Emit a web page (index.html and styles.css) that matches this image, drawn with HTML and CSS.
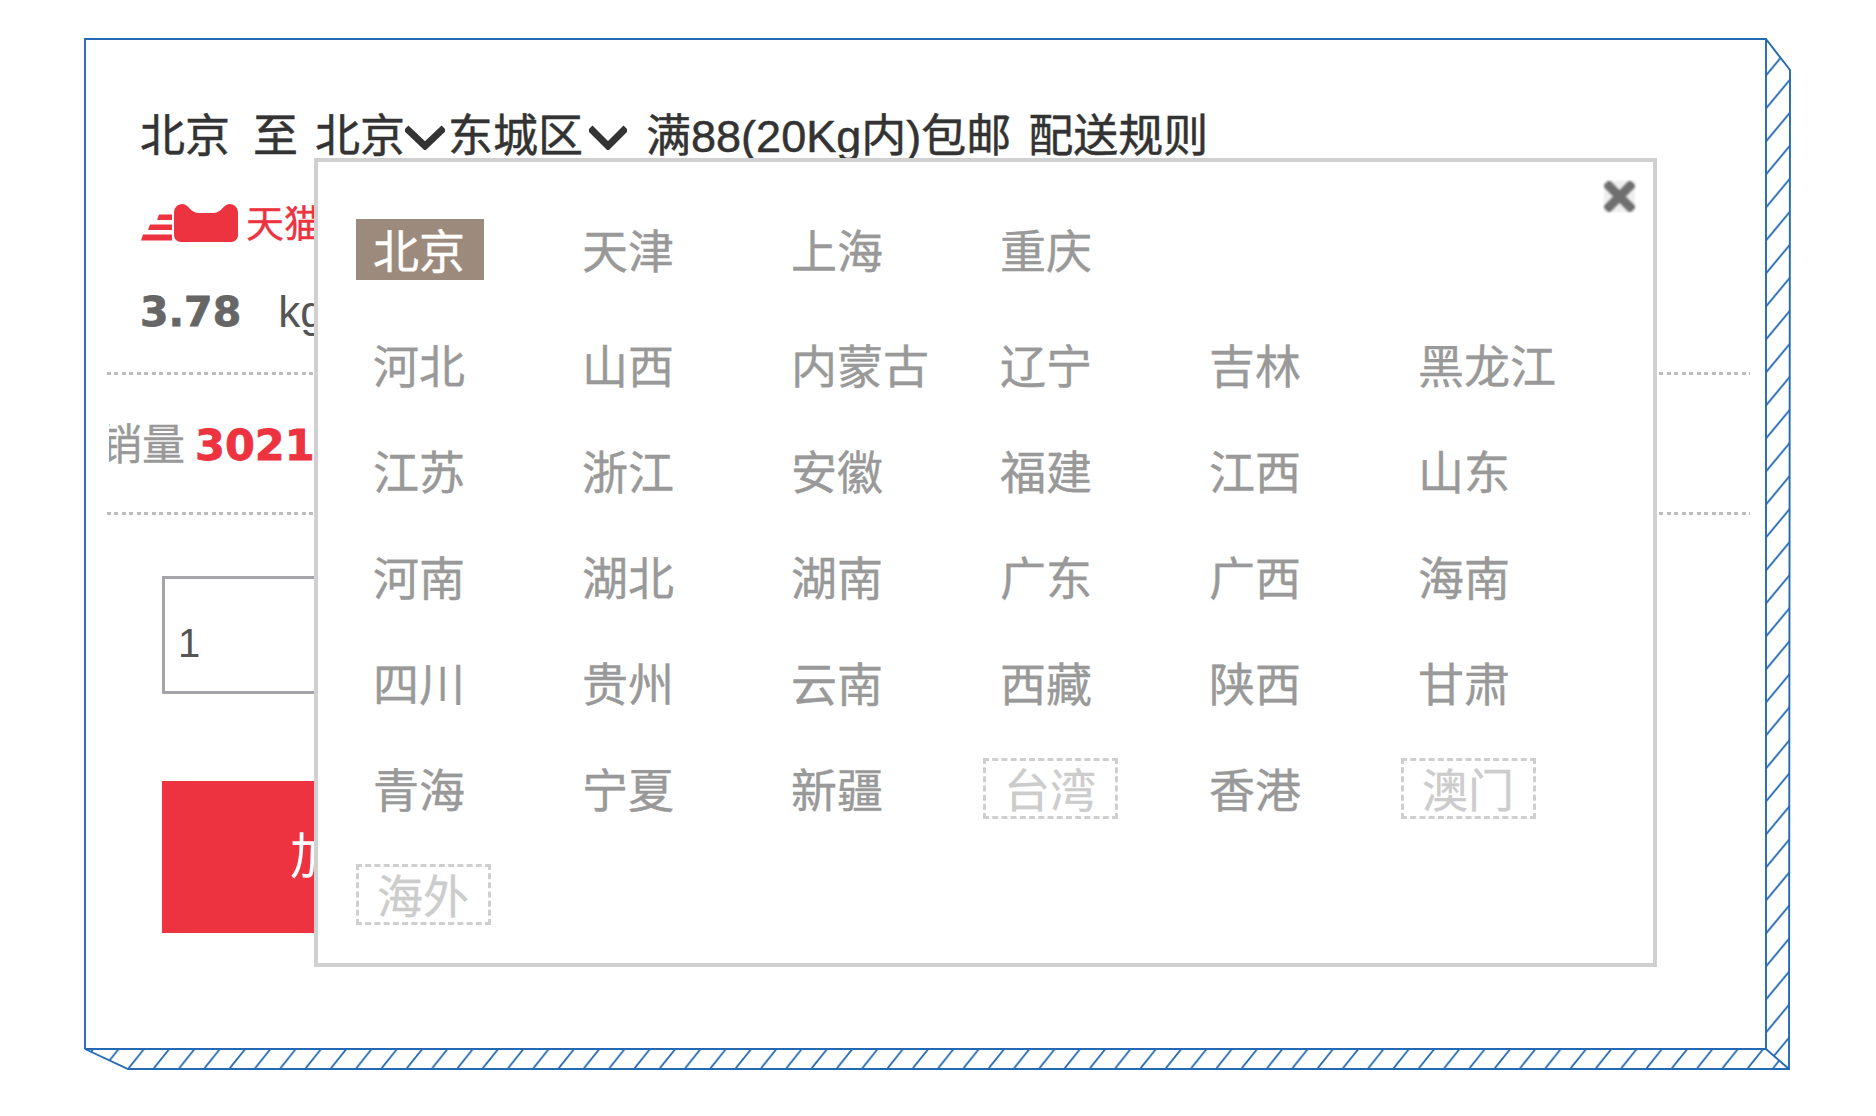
FILE: index.html
```html
<!DOCTYPE html>
<html lang="zh-CN">
<head>
<meta charset="utf-8">
<title>配送</title>
<link rel="stylesheet" href="styles.css">
</head>
<body>
<div class="stage">
  <svg class="frame" width="1876" height="1116" viewBox="0 0 1876 1116" aria-hidden="true">
    <defs>
      <pattern id="hatch-right" patternUnits="userSpaceOnUse" x="1766" y="75.5" width="24" height="33">
        <line x1="0" y1="33" x2="24" y2="4" class="hatch"/>
      </pattern>
      <pattern id="hatch-bottom" patternUnits="userSpaceOnUse" x="128" y="1049" width="25.3" height="20">
        <line x1="0" y1="20" x2="16" y2="0" class="hatch"/>
      </pattern>
    </defs>
    <polygon points="1766,39 1790,70 1789,1069 1766,1049" fill="url(#hatch-right)"/>
    <polygon points="85,1049 128,1069 1789,1069 1766,1049" fill="url(#hatch-bottom)"/>
    <polyline class="edge" points="85,1049 85,39 1766,39 1766,1049 85,1049 128,1069 1789,1069 1790,70 1766,39"/>
    <line class="edge" x1="1766" y1="1049" x2="1789" y2="1069"/>
  </svg>

  <main class="card">
    <div class="ship">
      <span>北京</span>
      <span class="gap-to">至</span>
      <span class="gap-sm">北京</span>
      <svg class="chev" width="40" height="26" viewBox="0 0 40 26"><polyline points="1,4 20,22 39,4"/></svg>
      <span class="gap-none">东城区</span>
      <svg class="chev chev-b" width="38" height="26" viewBox="0 0 38 26"><polyline points="1,4 19,22 37,4"/></svg>
      <span class="gap-free">满88(20Kg内)包邮</span>
      <span class="gap-rule">配送规则</span>
    </div>

    <div class="tmall">
      <svg class="tmall-logo" width="98" height="40" viewBox="0 0 98 40">
        <path d="M18 10.500h13v5.500H16zM9 20.500h22v5.500H7zM2 30.500h29v6H0z"/>
        <path d="M33 9C33 3 37 0 42 0C47 0 50 9 57 9H73C80 9 83 0 88 0C93 0 97 3 97 9V31C97 35 94 38 90 38H40C36 38 33 35 33 31Z"/>
      </svg>
      <span class="tmall-name">天猫</span>
    </div>

    <div class="weight"><b>3.78</b><span class="unit">kg</span></div>

    <div class="dots dots-a"></div>

    <div class="sales"><span class="sales-label">销量</span><b class="sales-num">30215</b></div>

    <div class="dots dots-b"></div>

    <div class="qty">1</div>
    <div class="buy">加入购物车</div>

    <section class="picker">
      <svg class="close" width="31" height="31" viewBox="0 0 31 31"><path d="M2 2L29 29M29 2L2 29"/></svg>
      <div class="grid grid-hot">
        <span class="opt on">北京</span><span class="opt">天津</span><span class="opt">上海</span><span class="opt">重庆</span>
      </div>
      <div class="grid">
        <span class="opt">河北</span><span class="opt">山西</span><span class="opt">内蒙古</span><span class="opt">辽宁</span><span class="opt">吉林</span><span class="opt">黑龙江</span>
        <span class="opt">江苏</span><span class="opt">浙江</span><span class="opt">安徽</span><span class="opt">福建</span><span class="opt">江西</span><span class="opt">山东</span>
        <span class="opt">河南</span><span class="opt">湖北</span><span class="opt">湖南</span><span class="opt">广东</span><span class="opt">广西</span><span class="opt">海南</span>
        <span class="opt">四川</span><span class="opt">贵州</span><span class="opt">云南</span><span class="opt">西藏</span><span class="opt">陕西</span><span class="opt">甘肃</span>
        <span class="opt">青海</span><span class="opt">宁夏</span><span class="opt">新疆</span><span class="opt off">台湾</span><span class="opt">香港</span><span class="opt off">澳门</span>
        <span class="opt off">海外</span>
      </div>
    </section>
  </main>
</div>
</body>
</html>
```

FILE: styles.css
```css
* { box-sizing: border-box; }

html, body {
  margin: 0;
  background: #fff;
}

body {
  font-family: "Liberation Sans", "Noto Sans CJK SC", sans-serif;
  color: #333;
}

.stage {
  position: relative;
  width: 1876px;
  height: 1116px;
  padding: 39px 0 0 85px;
  overflow: hidden;
}

.frame {
  position: absolute;
  top: 0;
  left: 0;
}

.edge {
  fill: none;
  stroke: #2369b3;
  stroke-width: 1.9;
}

.hatch {
  stroke: #2369b3;
  stroke-width: 1.8;
}

.card {
  position: relative;
  width: 1681px;
  height: 1010px;
  padding-top: 68px;
}

.ship {
  display: flex;
  align-items: center;
  height: 60px;
  margin-left: 55px;
  font-size: 45px;
  line-height: 60px;
  color: #333;
  -webkit-text-stroke: 0.5px #333;
  white-space: nowrap;
}

.gap-to { margin-left: 23px; }
.gap-sm { margin-left: 17px; }
.gap-none { margin-left: 3px; }
.gap-free { margin-left: 19px; }
.gap-rule { margin-left: 17px; }

.chev {
  margin-left: 0;
  flex: none;
}

.chev-b { margin-left: 6px; }

.chev polyline {
  fill: none;
  stroke: #333;
  stroke-width: 7;
}

.tmall {
  display: flex;
  align-items: center;
  height: 40px;
  margin: 37px 0 0 56px;
}

.tmall-logo {
  flex: none;
  fill: #ed3340;
}

.tmall-name {
  margin-left: 7px;
  font-size: 38px;
  line-height: 40px;
  color: #ed3340;
  -webkit-text-stroke: 0.4px #ed3340;
}

.weight {
  display: flex;
  align-items: center;
  height: 50px;
  margin: 43px 0 0 55px;
  color: #666;
}

.weight b {
  font-family: "DejaVu Sans", sans-serif;
  font-size: 41px;
  line-height: 50px;
  -webkit-text-stroke: 0.8px #666;
}

.unit {
  margin-left: 37px;
  font-size: 44px;
  line-height: 50px;
  color: #555;
}

.dots {
  height: 3px;
  margin-left: 22px;
  width: 1643px;
  background: repeating-linear-gradient(90deg, #bdbdbd 0 4px, transparent 4px 7.5px);
}

.dots-a { margin-top: 35px; }
.dots-b { margin-top: 42px; }

.sales {
  display: flex;
  align-items: center;
  height: 50px;
  margin: 45px 0 0 24px;
  overflow: hidden;
  white-space: nowrap;
}

.sales-label {
  margin-left: -10px;
  font-size: 43px;
  line-height: 52px;
  color: #999;
  -webkit-text-stroke: 0.4px #999;
}

.sales-num {
  margin-left: 10px;
  font-family: "DejaVu Sans", sans-serif;
  font-size: 43px;
  line-height: 52px;
  color: #ed3340;
  -webkit-text-stroke: 0.8px #ed3340;
}

.qty {
  width: 400px;
  height: 118px;
  margin: 61px 0 0 77px;
  padding: 0 0 0 13px;
  border: 3px solid #a5a5a9;
  font-size: 40px;
  line-height: 128px;
  color: #555;
}

.buy {
  width: 500px;
  height: 152px;
  margin: 87px 0 0 77px;
  padding-left: 128px;
  background: #ed3340;
  font-size: 50px;
  line-height: 152px;
  color: #fff;
  white-space: nowrap;
}

.picker {
  position: absolute;
  top: 119px;
  left: 229px;
  width: 1343px;
  height: 809px;
  padding: 57px 0 0 38px;
  background: #fff;
  border: 4px solid #d0d0d0;
}

.close {
  position: absolute;
  top: 19px;
  right: 18px;
  background: #eee;
  filter: blur(0.8px);
}

.close path {
  fill: none;
  stroke: #6f6f6f;
  stroke-width: 9;
}

.grid {
  display: grid;
  grid-template-columns: repeat(6, 209px);
  grid-auto-rows: 61px;
  row-gap: 45px;
}

.grid-hot {
  margin-bottom: 54px;
}

.opt {
  justify-self: start;
  height: 61px;
  padding: 0 17px;
  font-size: 46px;
  line-height: 66px;
  color: #999;
  -webkit-text-stroke: 0.4px #999;
  white-space: nowrap;
}

.on {
  width: 128px;
  background: #9c8b7d;
  color: #fff;
  -webkit-text-stroke: 0.4px #fff;
}

.off {
  width: 135px;
  padding: 0 18px;
  border: 3px dashed #cfcfcf;
  line-height: 60px;
  color: #ccc;
  -webkit-text-stroke: 0.3px #ccc;
}
```
